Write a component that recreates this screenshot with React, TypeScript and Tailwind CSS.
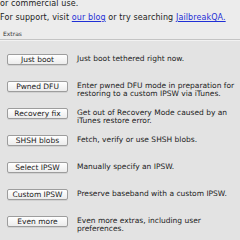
import React from "react";

const rows: { label: string; text: string }[] = [
  { label: "Just boot", text: "Just boot tethered right now." },
  { label: "Pwned DFU", text: "Enter pwned DFU mode in preparation for restoring to a custom IPSW via iTunes." },
  { label: "Recovery fix", text: "Get out of Recovery Mode caused by an iTunes restore error." },
  { label: "SHSH blobs", text: "Fetch, verify or use SHSH blobs." },
  { label: "Select IPSW", text: "Manually specify an IPSW." },
  { label: "Custom IPSW", text: "Preserve baseband with a custom IPSW." },
  { label: "Even more", text: "Even more extras, including user preferences." },
];

export default function App() {
  return (
    <div
      className="w-[240px] h-[240px] overflow-hidden bg-[#ececec] text-[#222] flex flex-col"
      style={{ fontFamily: '"DejaVu Sans", Verdana, sans-serif' }}
    >
      {/* header text */}
      <div className="mt-[-3px] text-[8px] leading-[14px] tracking-[0.1px]">
        <p>or commercial use.</p>
        <p>
          For support, visit <a className="text-[#1f2fd6] underline">our blog</a> or try searching{" "}
          <a className="text-[#1f2fd6] underline">JailbreakQA.</a>
        </p>
      </div>

      <div className="mt-[5px] pl-[3px] text-[6px] leading-[7px] text-[#333]">Extras</div>

      {/* extras box */}
      <div className="mt-[2px] flex-1 bg-[#e3e3e3] border-t border-[#c4c4c4] shadow-[inset_0_1px_0_#f2f2f2]">
        <div className="flex flex-col gap-[16px] pt-[14px] pl-[7px]">
          {rows.map((r) => (
            <div key={r.label} className="flex items-start gap-[9px] h-[11px]">
              <button
                type="button"
                className="shrink-0 w-[61px] h-[11px] rounded-[2px] border border-[#9d9d9d] bg-gradient-to-b from-[#ffffff] to-[#ececec] text-[7.5px] leading-[9px] text-[#1a1a1a] shadow-[0_1px_0_rgba(0,0,0,0.08)]"
              >
                {r.label}
              </button>
              <p className="w-[160px] text-[7.5px] leading-[7.5px] mt-[1px]">{r.text}</p>
            </div>
          ))}
        </div>
      </div>
    </div>
  );
}
